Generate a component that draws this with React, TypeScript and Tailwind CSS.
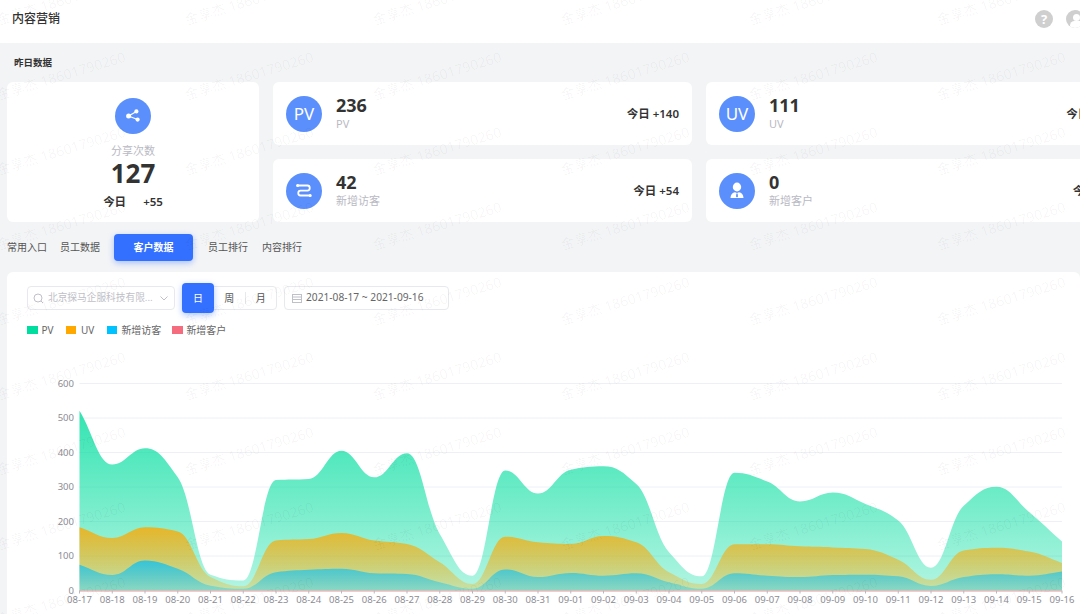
const FONT = { fontFamily: '"Noto Sans", "Noto Sans CJK SC", sans-serif' };

const DATES = [
  "08-17", "08-18", "08-19", "08-20", "08-21", "08-22", "08-23", "08-24", "08-25", "08-26", "08-27",
  "08-28", "08-29", "08-30", "08-31", "09-01", "09-02", "09-03", "09-04", "09-05", "09-06", "09-07",
  "09-08", "09-09", "09-10", "09-11", "09-12", "09-13", "09-14", "09-15", "09-16",
];
const PV = [521, 365, 412, 328, 46, 29, 320, 323, 405, 328, 398, 164, 43, 348, 281, 350, 360, 309, 111, 41, 341, 316, 258, 284, 251, 203, 66, 246, 301, 227, 142];
const UV = [183, 152, 183, 171, 39, 12, 145, 149, 167, 145, 135, 82, 19, 156, 140, 135, 158, 140, 53, 19, 134, 134, 128, 125, 120, 89, 31, 116, 124, 113, 80];
const VISIT = [75, 45, 87, 63, 14, 5, 53, 60, 63, 50, 48, 24, 5, 61, 39, 51, 43, 50, 24, 5, 50, 43, 39, 45, 46, 41, 13, 39, 47, 43, 55];

const X0 = 72.5;
const STEP = 32.75;
const Y0 = 218.5;
const UNIT = 0.345;

function px(i: number) {
  return X0 + i * STEP;
}
function py(v: number) {
  return Y0 - v * UNIT;
}

// monotone curve: tangent is the harmonic mean of the two slopes, flat at peaks
function areaPath(values: number[]) {
  const ys = values.map(py);
  const diffs = ys.slice(1).map((y, i) => y - ys[i]);
  const tangents = ys.map((_, i) => {
    if (i === 0) return diffs[0];
    if (i === ys.length - 1) return diffs[i - 1];
    const a = diffs[i - 1];
    const b = diffs[i];
    if (a * b <= 0) return 0;
    return (2 * a * b) / (a + b);
  });
  const h = 0.42;
  let d = `M${px(0)} ${Y0} L${px(0)} ${ys[0]}`;
  for (let i = 0; i < ys.length - 1; i++) {
    const c1 = ys[i] + tangents[i] * h;
    const c2 = ys[i + 1] - tangents[i + 1] * h;
    d += ` C${px(i) + STEP * h} ${c1} ${px(i + 1) - STEP * h} ${c2} ${px(i + 1)} ${ys[i + 1]}`;
  }
  d += ` L${px(ys.length - 1)} ${Y0} Z`;
  return d;
}

function Chart() {
  return (
    <svg width="1073" height="242" className="mt-[34px] block" style={FONT}>
      <defs>
        <linearGradient id="pv" x1="0" y1="0" x2="0" y2="1">
          <stop offset="0" stopColor="#00dd9e" stopOpacity="0.8" />
          <stop offset="1" stopColor="#00dd9e" stopOpacity="0.3" />
        </linearGradient>
        <linearGradient id="uv" x1="0" y1="0" x2="0" y2="1">
          <stop offset="0" stopColor="#ffa800" stopOpacity="0.8" />
          <stop offset="1" stopColor="#ffa800" stopOpacity="0.25" />
        </linearGradient>
        <linearGradient id="visit" x1="0" y1="0" x2="0" y2="1">
          <stop offset="0" stopColor="#00c2ff" stopOpacity="0.75" />
          <stop offset="1" stopColor="#00c2ff" stopOpacity="0.3" />
        </linearGradient>
      </defs>
      {[100, 200, 300, 400, 500, 600].map((v) => (
        <line key={v} x1={X0} x2={1055} y1={py(v)} y2={py(v)} stroke="#eef0f6" />
      ))}
      {[0, 100, 200, 300, 400, 500, 600].map((v) => (
        <text key={v} x={67} y={py(v) + 3} textAnchor="end" fontSize="9.5" fill="#8c8c94">
          {v}
        </text>
      ))}
      <path d={areaPath(PV)} fill="url(#pv)" />
      <path d={areaPath(UV)} fill="url(#uv)" />
      <path d={areaPath(VISIT)} fill="url(#visit)" />
      <line x1={X0} x2={1055} y1={Y0 + 0.5} y2={Y0 + 0.5} stroke="#e6989f" />
      {DATES.map((d, i) => (
        <g key={d}>
          <line x1={px(i)} x2={px(i)} y1={Y0} y2={Y0 + 3} stroke="#b8b8c0" />
          <text x={px(i)} y={Y0 + 12.5} textAnchor="middle" fontSize="9.5" fill="#8c8c94">
            {d}
          </text>
        </g>
      ))}
    </svg>
  );
}

function ShareIcon() {
  return (
    <svg width="16" height="16" viewBox="0 0 16 16" fill="#fff" stroke="#fff">
      <path d="M3.5 8 L11.5 3.5 M3.5 8 L12.5 11.5" strokeWidth="1.3" fill="none" />
      <circle cx="3.6" cy="8" r="2.5" stroke="none" />
      <circle cx="11.4" cy="3.4" r="2.1" stroke="none" />
      <circle cx="12.6" cy="11.6" r="2.1" stroke="none" />
    </svg>
  );
}

function RouteIcon() {
  return (
    <svg width="18" height="18" viewBox="0 0 18 18" fill="none" stroke="#fff" strokeWidth="1.8" strokeLinecap="round">
      <path d="M2.5 3.5 H12.5 C15.5 3.5 15.5 8.6 12.5 8.6 H5.5 C2.5 8.6 2.5 13.5 5.5 13.5 H15" />
      <circle cx="2.6" cy="3.5" r="1.5" fill="#fff" stroke="none" />
      <circle cx="15.2" cy="13.5" r="1.5" fill="#fff" stroke="none" />
    </svg>
  );
}

function PersonIcon() {
  return (
    <svg width="16" height="18" viewBox="0 0 16 18" fill="#fff">
      <ellipse cx="8" cy="5" rx="4.2" ry="4.4" />
      <path d="M1.5 16 C1.5 12.5 3.5 10.5 6 10.2 L8 11 L10 10.2 C12.5 10.5 14.5 12.5 14.5 16 Z" />
      <path d="M7.4 11.4 H8.6 L9 14.6 L8 15.6 L7 14.6 Z" fill="#5b8ffc" />
    </svg>
  );
}

function Badge({ children }: { children: React.ReactNode }) {
  return (
    <div className="flex size-9 shrink-0 items-center justify-center rounded-full bg-[#5b8ffc] text-[17px] leading-none text-white">
      {children}
    </div>
  );
}

function StatCard({ icon, value, label, today }: { icon: React.ReactNode; value: string; label: string; today: string }) {
  return (
    <div className="flex h-[63px] items-center rounded-md bg-white pl-[13px] pr-[13px]">
      <Badge>{icon}</Badge>
      <div className="ml-[14px] mt-[-4px] flex-1">
        <div className="text-[18px] font-bold leading-[24px] text-[#333]">{value}</div>
        <div className="text-[11px] leading-[14px] text-[#b9b9c3]">{label}</div>
      </div>
      <div className="text-[11.5px] font-semibold text-[#333]">今日 {today}</div>
    </div>
  );
}

function Watermark() {
  const cells = Array.from({ length: 6 * 9 }, (_, i) => i);
  return (
    <div className="pointer-events-none absolute inset-0 overflow-hidden">
      <div className="ml-[-33px] mt-[-37px] grid w-[1128px] grid-cols-[repeat(6,188px)] auto-rows-[75px]">
        {cells.map((i) => (
          <div key={i} className="flex items-center justify-center">
            <span className="-rotate-[17deg] whitespace-nowrap text-[14px] text-black/[0.045]">金享杰 18601790260</span>
          </div>
        ))}
      </div>
    </div>
  );
}

export default function App() {
  return (
    <div className="relative h-[614px] w-[1080px] overflow-hidden bg-[#f3f4f6]" style={FONT}>
      <header className="flex h-[43px] items-center justify-between bg-white pb-[5px] pl-[12px]">
        <span className="text-[12px] font-medium text-[#333]">内容营销</span>
        <div className="mr-[-4px] flex items-center gap-[13px]">
          <div className="flex size-[18px] items-center justify-center rounded-full bg-[#cfcfcf] text-[13px] font-bold leading-none text-white">?</div>
          <div className="relative size-[18px] overflow-hidden rounded-full bg-[#cfcfcf]">
            <div className="absolute left-[7px] top-[4px] size-[7px] rounded-full bg-white" />
            <div className="absolute left-[4px] top-[11px] h-[9px] w-[14px] rounded-full bg-white" />
          </div>
        </div>
      </header>

      <div className="pl-[7px]">
        <div className="pl-[7px] pt-[13px] text-[9.5px] font-semibold leading-[14px] text-[#333]">昨日数据</div>

        <div className="mt-[12px] grid w-[1118px] grid-cols-[252px_419px_419px] grid-rows-[63px_63px] gap-x-[14px] gap-y-[14px]">
          <div className="row-span-2 flex flex-col items-center rounded-md bg-white pt-[16px]">
            <Badge>
              <ShareIcon />
            </Badge>
            <div className="mt-[9px] text-[11px] leading-[15px] text-[#b9b9c3]">分享次数</div>
            <div className="text-[26px] font-bold leading-[31px] text-[#333]">127</div>
            <div className="mt-[5px] flex gap-[17px] text-[11.5px] font-semibold leading-[16px] text-[#333]">
              <span>今日</span>
              <span>+55</span>
            </div>
          </div>
          <StatCard icon="PV" value="236" label="PV" today="+140" />
          <StatCard icon="UV" value="111" label="UV" today="+62" />
          <StatCard icon={<RouteIcon />} value="42" label="新增访客" today="+54" />
          <StatCard icon={<PersonIcon />} value="0" label="新增客户" today="+0" />
        </div>

        <div className="mt-[12px] flex h-[27px] items-center text-[10px] text-[#555]">
          <span>常用入口</span>
          <span className="ml-[13px]">员工数据</span>
          <span className="ml-[14px] flex h-[27px] w-[79px] items-center justify-center rounded bg-[#3370ff] font-semibold text-white shadow-[0_2px_6px_rgba(51,112,255,0.4)]">
            客户数据
          </span>
          <span className="ml-[15px]">员工排行</span>
          <span className="ml-[14px]">内容排行</span>
        </div>

        <div className="mt-[11px] h-[400px] rounded-t-md bg-white">
          <div className="flex items-center pl-[20px] pt-[14px]">
            <div className="flex h-[24px] w-[148px] items-center rounded border border-[#e8e9ee] px-[5px] text-[9.7px] text-[#c0c0c8]">
              <svg width="11" height="11" viewBox="0 0 11 11" fill="none" stroke="#c0c0c8" className="shrink-0">
                <circle cx="5" cy="5" r="4" />
                <path d="M8 8 L10 10" />
              </svg>
              <span className="ml-[4px] flex-1 truncate">北京探马企服科技有限...</span>
              <svg width="10" height="10" viewBox="0 0 10 10" fill="none" stroke="#c0c0c8" className="shrink-0">
                <path d="M1.5 3.5 L5 7 L8.5 3.5" />
              </svg>
            </div>
            <div className="relative ml-[7px] flex h-[24px] w-[95px] items-center rounded border border-[#e8e9ee] text-[10px] text-[#555]">
              <span className="ml-[-1px] flex h-[30px] w-[32px] items-center justify-center rounded bg-[#3370ff] text-white shadow-[0_2px_6px_rgba(51,112,255,0.4)]">
                日
              </span>
              <span className="flex-1 text-center">周</span>
              <span className="h-[12px] w-px bg-[#e8e9ee]" />
              <span className="flex-1 text-center">月</span>
            </div>
            <div className="ml-[7px] flex h-[24px] w-[165px] items-center rounded border border-[#e8e9ee] px-[7px] text-[10.2px] text-[#666]">
              <svg width="10" height="10" viewBox="0 0 10 10" fill="none" stroke="#c0c0c8" className="shrink-0">
                <rect x="0.5" y="1.5" width="9" height="8" />
                <path d="M0.5 4 H9.5 M0.5 6.5 H9.5" />
              </svg>
              <span className="ml-[4px] whitespace-nowrap">2021-08-17 ~ 2021-09-16</span>
            </div>
          </div>

          <div className="mt-[12px] flex h-[16px] items-center pl-[20px] text-[10px] text-[#666]">
            <span className="h-[8px] w-[10.5px] bg-[#00dd9e]" />
            <span className="ml-[4px]">PV</span>
            <span className="ml-[12px] h-[8px] w-[10.5px] bg-[#ffa800]" />
            <span className="ml-[5px]">UV</span>
            <span className="ml-[12.5px] h-[8px] w-[10.5px] bg-[#00c2ff]" />
            <span className="ml-[4px]">新增访客</span>
            <span className="ml-[11px] h-[8px] w-[10.5px] bg-[#f56c7e]" />
            <span className="ml-[3.5px]">新增客户</span>
          </div>

          <Chart />
        </div>
      </div>

      <Watermark />
    </div>
  );
}
